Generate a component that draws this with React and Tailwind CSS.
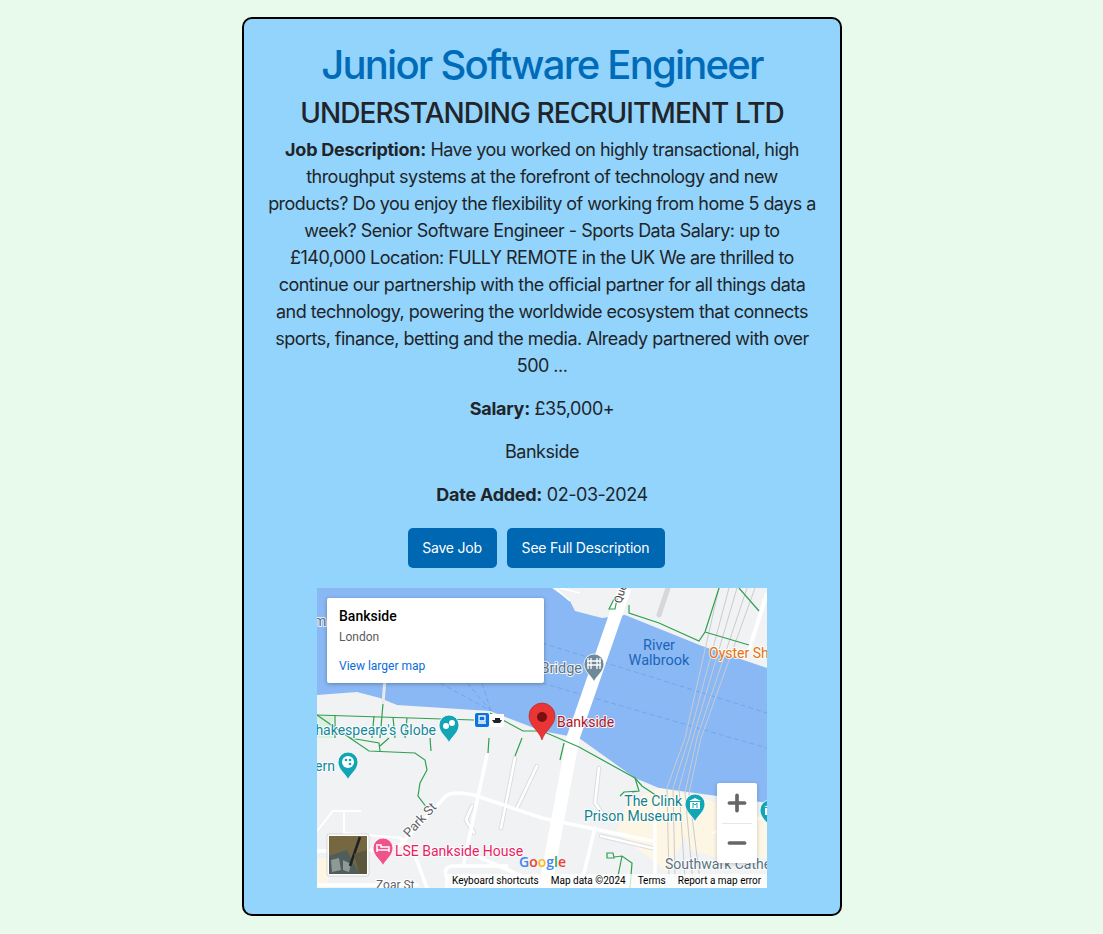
import { Plus, Minus } from 'lucide-react'

const GREEN = [
  'M0,127 L157,132',
  'M18,127 L18,150 M57,128 L55,150 M66,116 L63,150 M76,129 L78,150 M90,130 L88,150',
  'M0,127 L33,150 L52,163 L98,165 L108,172 L110,182 L103,195 L101,208 L110,220',
  'M33,150 L62,155 L63,163 M72,150 L63,158',
  'M173,125 L206,143 L225,143 L262,159 L318,190 L325,198 L340,208',
  'M318,190 L322,203 L315,204 M322,203 L307,204 L303,208',
  'M172,150 L171,165 M205,150 L198,168 M113,150 L114,163',
  'M247,155 L243,172',
  'M312,17 L312,25 L342,35 L382,53 L388,44 L402,0',
  'M388,44 L432,57 M422,0 L442,23',
  'M292,21 L297,11 L300,11 L298,21 Z',
  'M290,265 L296,265 L297,270 L290,270 Z M297,269 L305,268 L315,275 L313,300 M305,268 L300,293',
]

const ROADS = [
  'M83,257 L130,207 Q138,203 157,207 L225,230 L335,253',
  'M83,250 L96,262 L110,300',
  'M170,167 L150,260 L147,275',
  'M157,267 L225,297',
  'M338,217 L338,290',
  'M278,240 L267,285',
  'M0,263 L60,262 M0,297 L100,297',
  'M130,290 Q125,280 135,278 L190,278',
]

const OUTLINED_ROADS = [
  'M198,170 L184,240',
  'M220,178 L200,220',
  'M155,218 L149,232 L157,245',
  'M282,180 L278,215 L285,225',
  'M284,248 L335,260',
]

const THIN_ROADS = [
  'M0,243 L16,223 L44,223 M27,223 L27,245 L85,250',
  'M395,245 L450,228',
]

const RAILS = [
  'M402,0 L368,150 L350,200 L352,290',
  'M412,0 L372,150 L356,200 L358,290',
  'M420,0 L376,150 L362,200 L368,290',
  'M430,0 L380,150 L368,205 L376,295',
  'M438,0 L384,150 L372,205 L384,300',
]

function Pin({ x, y, color, children }) {
  return (
    <g transform={`translate(${x} ${y})`}>
      <path d="M0,18 C-2,12 -10,8 -10,0 A10,10 0 1 1 10,0 C10,8 2,12 0,18 Z" fill={color} stroke="#fff" strokeWidth="0.8" />
      {children}
    </g>
  )
}

function Label({ x, y, color, size = 14, anchor = 'start', children }) {
  return (
    <text
      x={x}
      y={y}
      fill={color}
      fontSize={size}
      textAnchor={anchor}
      stroke="#fff"
      strokeWidth="2"
      strokeOpacity="0.85"
      paintOrder="stroke"
    >
      {children}
    </text>
  )
}

function MapCanvas() {
  return (
    <svg viewBox="0 0 450 300" width="450" height="300" className="block font-['Roboto',sans-serif]">
      <rect width="450" height="300" fill="#8ab8f5" />

      {/* river ferry routes */}
      <path d="M225,55 L450,125 M225,95 L450,160 M123,95 L174,123 M150,95 L174,123 M165,95 L174,123" stroke="#6b9fe8" strokeWidth="0.8" strokeDasharray="5 3" fill="none" />

      {/* land */}
      <path d="M235,0 L253,13 L258,23 L285,30 L308,27 L385,58 L450,80 L450,0 Z" fill="#f0f2f4" />
      <path d="M0,107 L40,104 L63,110 L80,117 L173,123 L225,143 L262,150 L318,190 L342,200 L450,215 L450,300 L0,300 Z" fill="#f0f2f4" />
      <path d="M0,270 L10,270 L12,300 L0,300 Z M342,200 L378,208 L400,215 L400,270 L372,262 L368,248 L352,285 L300,245 L310,215 Z M400,240 L450,226 L450,270 L400,275 Z" fill="#fdf6e4" />
      <path d="M0,128 L16,128 L16,150 L0,150 Z" fill="#dcefe0" />
      <path d="M263,5 L243,0 M238,0 L253,13" stroke="#fff" strokeWidth="1.5" fill="none" />
      <path d="M351,0 L342,27" stroke="#d5d7d9" strokeWidth="5" strokeLinecap="round" />

      {THIN_ROADS.map((d, i) => (
        <path key={i} d={d} fill="none" stroke="#fff" strokeWidth="2" />
      ))}
      {RAILS.map((d, i) => (
        <path key={i} d={d} fill="none" stroke="#c9cbce" strokeWidth="1" />
      ))}
      {OUTLINED_ROADS.map((d, i) => (
        <path key={i} d={d} fill="none" stroke="#dcdee1" strokeWidth="4.5" strokeLinecap="round" />
      ))}
      {OUTLINED_ROADS.map((d, i) => (
        <path key={i} d={d} fill="none" stroke="#fff" strokeWidth="2.5" strokeLinecap="round" />
      ))}
      {ROADS.map((d, i) => (
        <path key={i} d={d} fill="none" stroke="#fff" strokeWidth="3.5" strokeLinecap="round" />
      ))}

      {/* thames crossing */}
      <path d="M68,90 L66,116" stroke="#e8eaed" strokeWidth="3" />
      <path d="M308,0 L256,150 L228,300" stroke="#fff" strokeWidth="13" fill="none" />
      <path d="M450,5 L432,62" stroke="#fff" strokeWidth="4" />

      {GREEN.map((d, i) => (
        <path key={i} d={d} fill="none" stroke="#2fa04f" strokeWidth="1.2" />
      ))}

      {/* labels */}
      <Label x={-3} y={38} color="#5b7383">m</Label>
      <Label x={265} y={85} color="#5b7383" anchor="end" size={14.5}>Bridge</Label>
      <text x={342} y={62} fill="#1a66b8" fontSize="14.5" textAnchor="middle">River</text>
      <text x={342} y={77} fill="#1a66b8" fontSize="14.5" textAnchor="middle">Walbrook</text>
      <Label x={392} y={70} color="#e8710a" size={14}>Oyster Sh</Label>
      <Label x={240} y={139} color="#b3141d" size={14}>Bankside</Label>
      <Label x={119} y={147} color="#12899a" anchor="end">Shakespeare's Globe</Label>
      <Label x={18} y={183} color="#12899a" anchor="end">Tavern</Label>
      <Label x={78} y={268} color="#ea1e63">LSE Bankside House</Label>
      <Label x={365} y={218} color="#12828f" anchor="end">The Clink</Label>
      <Label x={365} y={233} color="#12828f" anchor="end">Prison Museum</Label>
      <Label x={348} y={281} color="#5b7383">Southwark Cathe</Label>
      <text x={92} y={250} fill="#5f6368" fontSize="13" transform="rotate(-47 92 250)" stroke="#fff" strokeWidth="2" paintOrder="stroke">Park St</text>
      <text x={59} y={301} fill="#5f6368" fontSize="12" stroke="#fff" strokeWidth="2" paintOrder="stroke">Zoar St</text>
      <text x={304} y={16} fill="#3c4043" fontSize="11" transform="rotate(-72 304 16)" stroke="#fff" strokeWidth="2" paintOrder="stroke">Que</text>

      {/* pins */}
      <Pin x={132} y={137} color="#12a5b5">
        <circle cx="-3" cy="1" r="3" fill="#fff" />
        <circle cx="3" cy="-2" r="3" fill="#fff" />
      </Pin>
      <Pin x={31} y={174} color="#12a5b5">
        <circle cx="0" cy="0" r="6" fill="#fff" />
        <circle cx="-2" cy="-2" r="1.3" fill="#12a5b5" />
        <circle cx="2" cy="-2" r="1.3" fill="#12a5b5" />
        <circle cx="2" cy="2" r="1.3" fill="#12a5b5" />
      </Pin>
      <Pin x={66} y={260} color="#f0528b">
        <path d="M-6,-4 L-6,4 M-6,2 L6,2 L6,4 M6,2 L6,-1 L-2,-1 L-2,-3 L-5,-3" stroke="#fff" strokeWidth="1.5" fill="none" />
      </Pin>
      <Pin x={277} y={76} color="#6f8a96">
        <path d="M-6,-6 L-6,5 M-3,-6 L-3,5 M3,-6 L3,5 M6,-6 L6,5 M-7,-3 L7,-3 M-7,1 L7,1" stroke="#fff" strokeWidth="1.3" fill="none" />
      </Pin>
      <Pin x={378} y={216} color="#12a5b5">
        <path d="M-6,-3 L0,-6 L6,-3 Z M-5,-2 L5,-2 L5,5 L-5,5 Z" fill="#fff" />
        <path d="M-2,4 L-2,-1 L0,1 L2,-1 L2,4" stroke="#12a5b5" strokeWidth="1" fill="none" />
      </Pin>
      <Pin x={453} y={222} color="#12a5b5">
        <path d="M-6,-3 L0,-6 L6,-3 Z M-5,-2 L5,-2 L5,5 L-5,5 Z" fill="#fff" />
      </Pin>

      {/* ferry */}
      <rect x="158" y="125" width="14" height="14" rx="2" fill="#0b72e0" />
      <path d="M161,135 L169,135 M162,128 L168,128 L168,133 L162,133 Z" stroke="#fff" strokeWidth="1.3" fill="none" />
      <rect x="173" y="126" width="14" height="13" fill="#fff" />
      <path d="M175,132 L185,132 L183,135 L177,135 Z M178,130 L183,130 L183,132 L178,132 Z" fill="#222" />

      {/* marker */}
      <path d="M225,152 C222,142 212,138 212,128 A13,13 0 1 1 238,128 C238,138 228,142 225,152 Z" fill="#ea3535" stroke="#b51d1d" strokeWidth="0.6" />
      <circle cx="225" cy="129" r="5" fill="#7c0f12" />

      {/* satellite thumbnail */}
      <rect x="10" y="246" width="42" height="42" rx="2" fill="#fff" stroke="#00000022" />
      <rect x="12" y="248" width="38" height="38" fill="#75673f" />
      <path d="M12,268 L30,262 L42,286 L12,286 Z" fill="#4f5d5c" />
      <path d="M14,272 L22,270 L24,282 L15,284 Z M26,272 L34,276 L32,284 L26,282 Z" fill="#8f9a94" />
      <path d="M43,249 L33,278" stroke="#1d2027" strokeWidth="2.5" />
      <path d="M37,266 L50,262 L50,286 L42,286 Z" fill="#5a573f" />

      {/* logo */}
      <text x={202} y={279} fontSize="14" fontFamily="'Open Sans', sans-serif" fontWeight="600">
        <tspan fill="#4285f4">G</tspan>
        <tspan fill="#ea4335">o</tspan>
        <tspan fill="#fbbc05">o</tspan>
        <tspan fill="#4285f4">g</tspan>
        <tspan fill="#34a853">l</tspan>
        <tspan fill="#ea4335">e</tspan>
      </text>
    </svg>
  )
}

function MapEmbed() {
  return (
    <div className="relative w-[450px] h-[300px] mx-auto overflow-hidden text-left font-['Roboto',sans-serif]">
      <MapCanvas />

      <div className="absolute left-[10px] top-[10px] w-[217px] h-[85px] bg-white rounded-[2px] shadow-[0_1px_4px_rgba(0,0,0,0.3)] pl-3 pt-[9px]">
        <div className="text-[14px] leading-[18px] font-medium text-black">Bankside</div>
        <div className="text-[12px] leading-[16px] mt-[4px] text-[#5b5b5b]">London</div>
        <div className="text-[12px] leading-[16px] mt-[13px] text-[#0a6cd8]">View larger map</div>
      </div>

      <div className="absolute left-[400px] top-[195px] w-10 h-20 bg-white flex flex-col items-center rounded-[2px] shadow-[0_1px_4px_rgba(0,0,0,0.2)]">
        <div className="h-10 flex items-center justify-center">
          <Plus size={26} strokeWidth={3.4} className="text-[#666666]" />
        </div>
        <div className="w-[30px] h-px bg-[#e6e6e6]" />
        <div className="flex-1 flex items-center justify-center">
          <Minus size={26} strokeWidth={3.4} className="text-[#666666]" />
        </div>
      </div>

      <div className="absolute left-[128px] right-0 bottom-0 h-[14px] bg-white/75 flex items-center text-[10px] leading-none text-black">
        <span className="ml-[7px]">Keyboard shortcuts</span>
        <span className="ml-[12px]">Map data ©2024</span>
        <span className="ml-[12px]">Terms</span>
        <span className="ml-[12px]">Report a map error</span>
      </div>
    </div>
  )
}

export default function App() {
  return (
    <div className="min-h-screen bg-[#e8faec] pt-[17px] pb-[18px] font-['Inter',sans-serif] text-[#212529]">
      <div className="ml-[242px] w-[600px] h-[899px] bg-[#93d4fc] border-2 border-black rounded-[10px] px-5 pt-[22px] text-center">
        <h1 className="text-[40px] leading-[48px] mb-2 font-[450] tracking-[-1.76px] text-[#006bb8]">Junior Software Engineer</h1>
        <h2 className="text-[28px] leading-[33.6px] mb-[5px] font-[450] tracking-[-0.94px]">UNDERSTANDING RECRUITMENT LTD</h2>
        <p className="text-[18px] leading-[27px] mb-4 px-[3px] tracking-[-0.53px]">
          <strong className="font-bold tracking-[-0.26px]">Job Description:</strong> Have you worked on highly transactional, high throughput systems at the forefront of technology and new products? Do you enjoy the flexibility of working from home 5 days a week? Senior Software Engineer - Sports Data Salary: up to £140,000 Location: FULLY REMOTE in the UK We are thrilled to continue our partnership with the official partner for all things data and technology, powering the worldwide ecosystem that connects sports, finance, betting and the media. Already partnered with over 500 ...
        </p>
        <p className="text-[18px] leading-[27px] mb-4 tracking-[-0.45px]">
          <strong className="font-bold tracking-[-0.26px]">Salary:</strong> £35,000+
        </p>
        <p className="text-[18px] leading-[27px] mb-4 tracking-[-0.45px]">Bankside</p>
        <p className="text-[18px] leading-[27px] mb-5 tracking-[-0.45px]">
          <strong className="font-bold tracking-[-0.26px]">Date Added:</strong> 02-03-2024
        </p>
        <div className="flex justify-center mb-5">
          <button className="h-10 w-[89px] mr-[10px] rounded-[5px] bg-[#0067b3] text-white text-[14px] tracking-[-0.2px]">Save Job</button>
          <button className="h-10 w-[158px] mr-[12px] rounded-[5px] bg-[#0067b3] text-white text-[14px] tracking-[-0.2px]">See Full Description</button>
        </div>
        <MapEmbed />
      </div>
    </div>
  )
}
